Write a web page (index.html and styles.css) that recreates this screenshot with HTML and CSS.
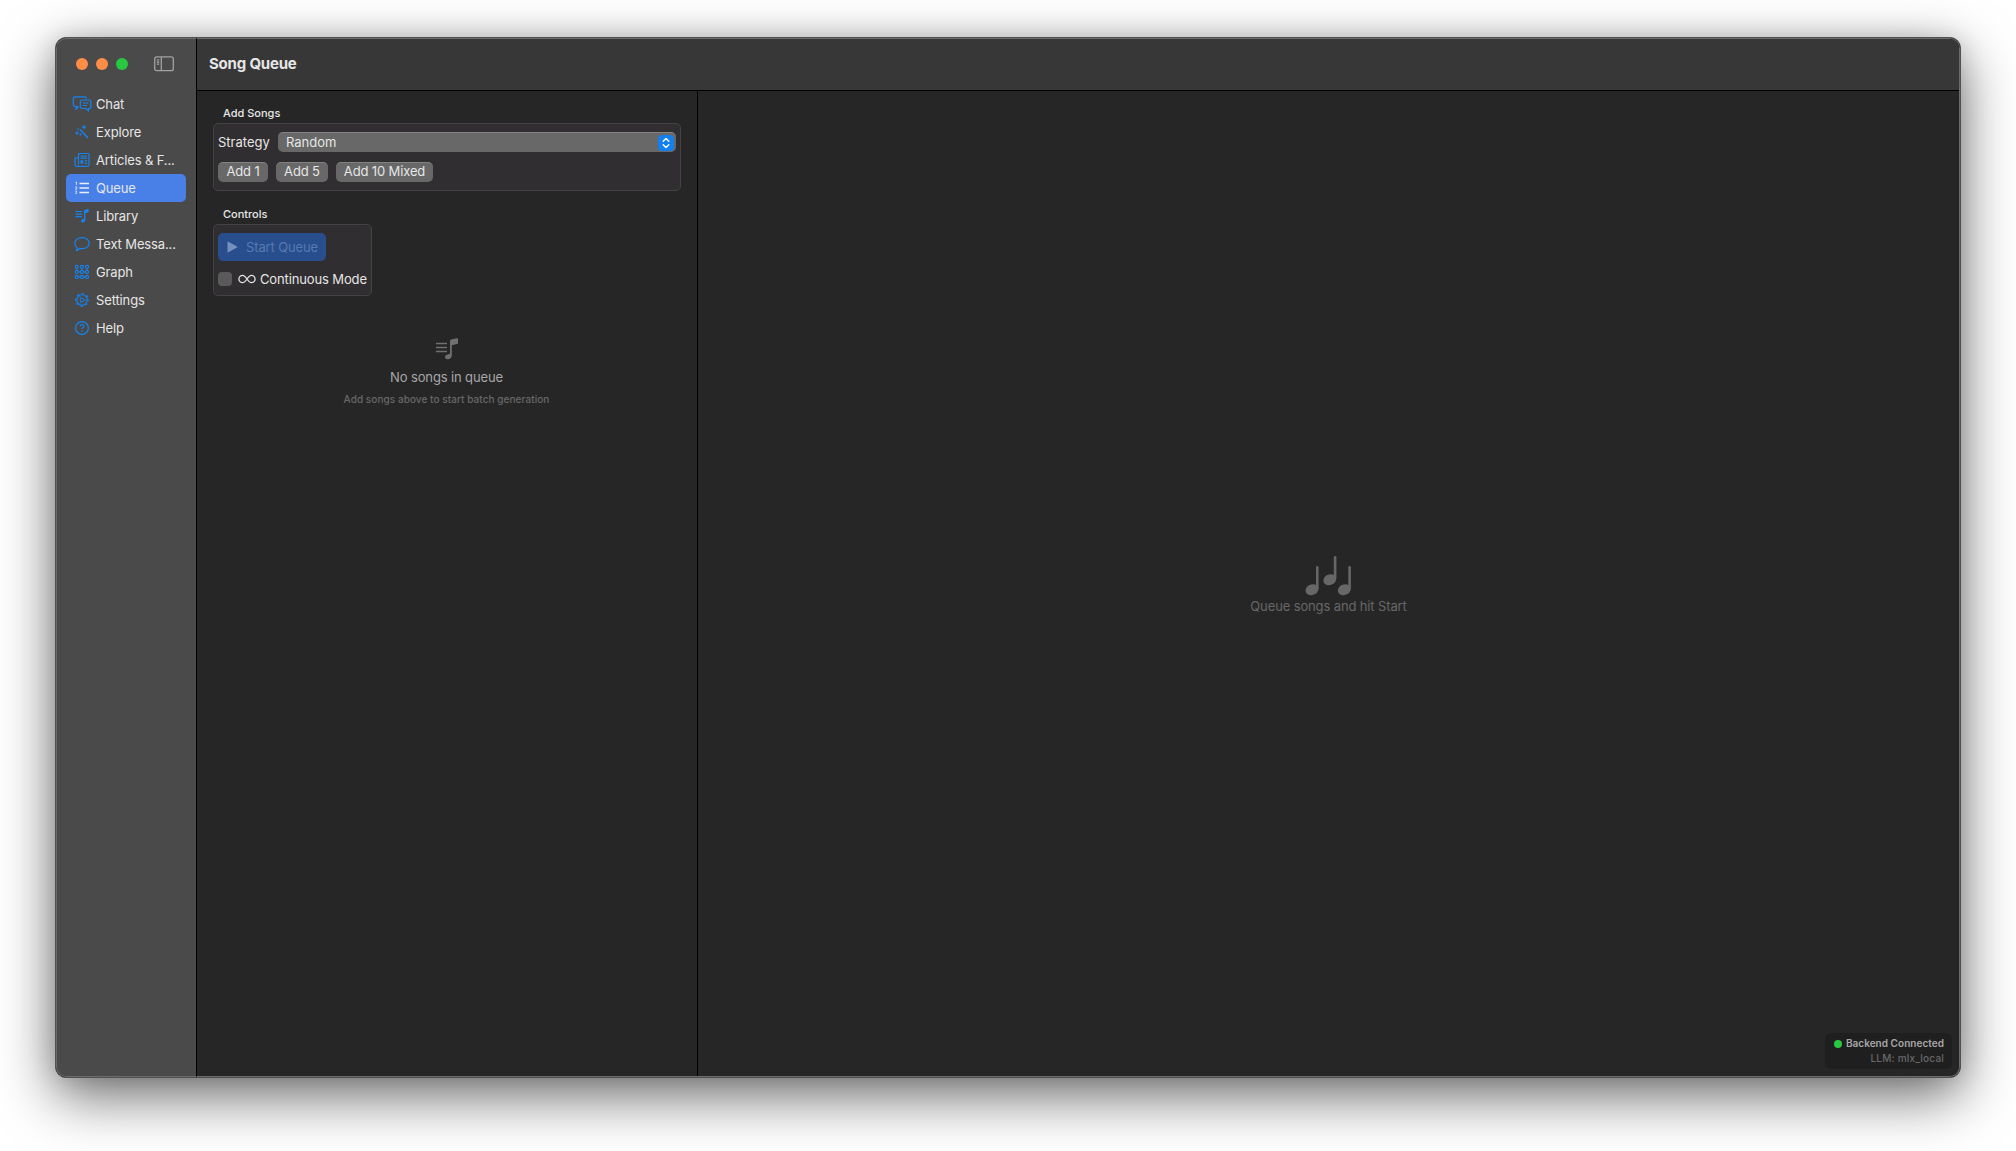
FILE: index.html
```
<!DOCTYPE html>
<html lang="en">
<head>
  <meta charset="UTF-8" />
  <meta name="viewport" content="width=device-width, initial-scale=1.0" />
  <title>Song Queue</title>
  <link rel="stylesheet" href="styles.css">
</head>
<body>
  <div class="window">
    <aside class="sidebar">
      <div class="window-controls">
        <span class="light"></span>
        <span class="light"></span>
        <span class="light green"></span>
        <svg class="toggle" width="20" height="16" viewBox="0 0 20 16" fill="none" stroke="#a2a2a2" stroke-width="1.3">
          <rect x=".7" y=".9" width="18.6" height="13.8" rx="2" />
          <path d="M7.3 1v13.6M2.8 3.8h2.4M2.8 6h2.4M2.8 8.2h2.4" />
        </svg>
      </div>
      <nav class="nav">
        <a class="nav-item">
          <svg class="icon" viewBox="0 0 20 16"><path d="M6 10.500H3.300A2 2 0 0 1 1.300 8.500V2.900A2 2 0 0 1 3.300 .9h9.400a2 2 0 0 1 2 1.600M4 10.500v2.700l2.700-2.400M10.300 4h6.600A2 2 0 0 1 18.900 6v4.500A2 2 0 0 1 16.900 12.500h-.4v2.300L14 12.500h-3.700A2 2 0 0 1 8.300 10.500V6A2 2 0 0 1 10.300 4zM10.800 7h5.600M10.800 9.500h4" /></svg>
          <span>Chat</span>
        </a>
        <a class="nav-item">
          <svg class="icon" viewBox="0 0 20 16"><path d="M8 5.500l8 8.500" stroke-width="1.600" /><path d="M12 1.200v4M10 3.200h4M5.500 4.700l1.500 1M5 7.200v3.600M3.200 9h3.600M8.500 9.500v2M7.500 10.500h2" /></svg>
          <span>Explore</span>
        </a>
        <a class="nav-item">
          <svg class="icon" viewBox="0 0 20 16"><path d="M7 14.300H4.500a1.500 1.500 0 0 1-1.500-1.500V6h3.500M6.500 12.800V2.500a1 1 0 0 1 1-1h8.500a1 1 0 0 1 1 1v10.300a1.500 1.500 0 0 1-1.500 1.500H5.500M8.500 4h6.500M8.500 6.200h6.500M12.800 8.900h2.400M12.800 11.300h2.400" /><path class="fill" d="M8.500 8.300h2.800v3.300H8.500z" /></svg>
          <span>Articles &amp; F...</span>
        </a>
        <a class="nav-item active">
          <svg class="icon" viewBox="0 0 20 16"><path d="M7.500 3.500h9.500M7.500 8h9.500M7.500 12.500h9.500" stroke-width="1.400" /><path d="M3.500 2.500l1-.6v3M3.200 6.900h1.600v1l-1.400 1.300h1.600M3.300 11.200h1.500l-.7 1.200.8.800-1.600.5" stroke-width=".8" /></svg>
          <span>Queue</span>
        </a>
        <a class="nav-item">
          <svg class="icon" viewBox="0 0 20 16"><path d="M3.500 3.500h6.500M3.500 6.100h6.500M3.500 8.700h6.500" /><path class="fill" d="M12 3q0-1 1-1.200l3-.8q.6-.1.600.5v2.200q0 .5-.6.700l-2.600.700v7q0 2-2.300 2.400Q9 14.500 9 12.900q0-1.300 1.800-1.700l1.200-.4z" /></svg>
          <span>Library</span>
        </a>
        <a class="nav-item">
          <svg class="icon" viewBox="0 0 20 16"><path d="M10 1.700c4.200 0 7.200 2.400 7.200 5.500s-3 5.500-7.200 5.500c-.8 0-1.500-.1-2.100-.2-1 1-2.200 1.700-3.400 1.800.6-.8.900-1.700.800-2.600C3.700 10.700 2.800 9.100 2.800 7.200c0-3.100 3-5.500 7.200-5.500z" /></svg>
          <span>Text Messa...</span>
        </a>
        <a class="nav-item">
          <svg class="icon" viewBox="0 0 20 16"><g stroke-width="1.100"><circle cx="4.800" cy="2.900" r="1.500" /><circle cx="9.900" cy="2.900" r="1.500" /><circle cx="15" cy="2.900" r="1.500" /><circle cx="4.800" cy="7.900" r="1.500" /><circle cx="9.900" cy="7.900" r="1.500" /><circle cx="15" cy="7.900" r="1.500" /><circle cx="4.800" cy="12.900" r="1.500" /><circle cx="9.900" cy="12.900" r="1.500" /><circle cx="15" cy="12.900" r="1.500" /><path d="M6.300 7.900h2.100M11.400 7.900h2.100M6.300 12.900h2.100M11.400 12.900h2.100M4.800 4.400v2M9.900 4.400v2M15 4.400v2" /></g></svg>
          <span>Graph</span>
        </a>
        <a class="nav-item">
          <svg class="icon" viewBox="0 0 20 16"><circle cx="10" cy="8" r="5.200" stroke-width="1.100" /><circle cx="10" cy="8" r="6.300" stroke-width="1.200" stroke-dasharray="2.474 2.474" stroke-dashoffset="1.237" /><circle cx="10" cy="8" r="1.900" stroke-width="1" /><path d="M9 6.300L7.500 3.700M9 9.700l-1.500 2.600M12 8h3" stroke-width=".7" /></svg>
          <span>Settings</span>
        </a>
        <a class="nav-item">
          <svg class="icon" viewBox="0 0 20 16"><circle cx="10" cy="8" r="6.400" /><path d="M8.200 6.400c0-2.600 3.800-2.400 3.800-.2 0 1.400-2 1.400-2 3M10 10.600v1.300" /></svg>
          <span>Help</span>
        </a>
      </nav>
    </aside>

    <main class="main">
      <header class="titlebar">
        <h1>Song Queue</h1>
      </header>
      <div class="panes">
        <section class="queue-pane">
          <h2 class="group-label">Add Songs</h2>
          <div class="group add-group">
            <div class="row strategy-row">
              <span class="strategy-label">Strategy</span>
              <div class="select">
                <span class="select-value">Random</span>
                <span class="stepper">
                  <svg width="10" height="12" viewBox="0 0 10 12" fill="none" stroke="#fff" stroke-width="1.400" stroke-linecap="round" stroke-linejoin="round"><path d="M2.200 4.200L5 1.500l2.800 2.700M2.200 7.800L5 10.500l2.800-2.700" /></svg>
                </span>
              </div>
            </div>
            <div class="row">
              <button class="btn add-one">Add 1</button>
              <button class="btn add-five">Add 5</button>
              <button class="btn add-mixed">Add 10 Mixed</button>
            </div>
          </div>

          <h2 class="group-label controls-label">Controls</h2>
          <div class="group controls-group">
            <button class="start" disabled>
              <svg width="11" height="12" viewBox="0 0 11 12"><path d="M.5 1.200q0-1 .9-.5l8.600 4.700q.8.600 0 1.200l-8.600 4.700q-.9.500-.9-.5z" fill="#7590bd" /></svg>
              <span>Start Queue</span>
            </button>
            <label class="continuous">
              <span class="checkbox"></span>
              <svg width="18" height="10" viewBox="0 0 18 10" fill="none" stroke="#e4e4e4" stroke-width="1.300"><path d="M9 5C7.300 2.500 6.200 1.300 4.600 1.300a3.700 3.700 0 0 0 0 7.400C6.200 8.700 7.300 7.500 9 5s2.800-3.700 4.400-3.700a3.700 3.700 0 0 1 0 7.400C11.800 8.700 10.700 7.500 9 5z" /></svg>
              <span class="continuous-text">Continuous Mode</span>
            </label>
          </div>

          <div class="empty">
            <svg width="24" height="22" viewBox="0 0 24 22"><path d="M1 5.500h11M1 9.500h11M1 13.500h11" stroke="#707070" stroke-width="1.400" /><path d="M15 3q0-1.200 1.200-1.500L22 .3q1-.2 1 .7v4q0 .8-.9 1l-5.300 1.200v10.300q0 3-3.600 3.700-3.300.4-3.300-2.100 0-2 2.600-2.700l2.500-.6z" fill="#707070" /></svg>
            <p class="empty-title">No songs in queue</p>
            <p class="empty-hint">Add songs above to start batch generation</p>
          </div>
        </section>

        <section class="detail-pane">
          <div class="placeholder">
            <svg width="46" height="40" viewBox="0 0 46 40" fill="#676767">
              <g id="note">
                <ellipse cx="7" cy="33.700" rx="6.600" ry="5.300" transform="rotate(-22 7 33.700)" />
                <path d="M11 11.200q0-1.200 1.300-1.200t1.300 1.200V33H11z" />
              </g>
              <use href="#note" x="17.800" y="-10" />
              <use href="#note" x="32.300" />
            </svg>
            <p>Queue songs and hit Start</p>
          </div>
          <div class="status">
            <div class="status-line"><span class="dot"></span><span class="status-text">Backend Connected</span></div>
            <div class="status-model">LLM: mlx_local</div>
          </div>
        </section>
      </div>
    </main>
  </div>
</body>
</html>
```
FILE: styles.css
```
* {
  box-sizing: border-box;
}
body {
  margin: 0;
  height: 1151px;
  padding: 37px 55px 73px;
  overflow: hidden;
  background-color: #fff;
  color: #e6e6e6;
  font-family: Inter, 'Liberation Sans', sans-serif;
  font-size: 13px;
  line-height: 16px;
  letter-spacing: -0.13px;
}
h1, h2, p {
  margin: 0;
}
.window {
  display: flex;
  width: 1906px;
  height: 1041px;
  border: 1px solid #515151;
  border-radius: 11px;
  overflow: hidden;
  background-color: #262626;
  box-shadow: 0 18px 56px rgba(0, 0, 0, 0.58), 0 0 24px rgba(0, 0, 0, 0.12);
}

/* Sidebar */
.sidebar {
  width: 141px;
  flex: none;
  border: 1px solid #6b6b6b;
  border-right: 1px solid #000;
  border-radius: 10px 0 0 10px;
  background-color: #4a4a4a;
}
.window-controls {
  display: flex;
  align-items: center;
  gap: 8px;
  height: 51px;
  padding: 0 0 1px 19px;
}
.light {
  width: 12px;
  height: 12px;
  border-radius: 50%;
  background-color: #ff8d48;
}
.green {
  background-color: #28c840;
}
.toggle {
  margin-left: 18px;
}
.nav {
  padding: 0 9px;
}
.nav-item {
  display: flex;
  align-items: center;
  gap: 4px;
  height: 28px;
  padding-left: 6px;
  border-radius: 5px;
  white-space: nowrap;
}
.icon {
  width: 20px;
  height: 16px;
  flex: none;
  fill: none;
  stroke: #1683f0;
  stroke-width: 1.2;
}
.icon .fill {
  fill: #1683f0;
  stroke: none;
}
.active {
  width: 120px;
  background-color: #4880e7;
}
.active .icon {
  stroke: #e9effb;
}

/* Main area */
.main {
  flex: 1;
  display: flex;
  flex-direction: column;
  border: 1px solid #6b6b6b;
  border-left: none;
  border-radius: 0 10px 10px 0;
}
.titlebar {
  display: flex;
  align-items: center;
  height: 52px;
  padding: 0 0 2px 12px;
  border-bottom: 1px solid #000;
  background-color: #373737;
  border-radius: 0 9px 0 0;
}
.titlebar h1 {
  font-size: 15px;
  line-height: 18px;
  font-weight: 700;
  letter-spacing: -0.2px;
}
.panes {
  flex: 1;
  display: flex;
}
.queue-pane {
  width: 501px;
  padding: 15px 16px;
  border-right: 1px solid #000;
}
.group-label {
  padding-left: 10px;
  font-size: 11px;
  line-height: 14px;
  font-weight: 500;
  letter-spacing: 0;
}
.group {
  border: 1px solid #434244;
  border-radius: 5px;
  background-color: #302e30;
}
.add-group {
  height: 68px;
  margin-top: 3px;
  padding: 8px 4px;
}
.row {
  display: flex;
  align-items: center;
  gap: 8px;
}
.strategy-row {
  margin-bottom: 10px;
}
.strategy-label {
  width: 52px;
  white-space: nowrap;
  letter-spacing: 0;
}
.select {
  flex: 1;
  display: flex;
  align-items: center;
  justify-content: space-between;
  height: 20px;
  padding: 0 2px 0 8px;
  border-top: 1px solid #828282;
  border-radius: 5px;
  background-color: #686868;
}
.select-value {
  padding-bottom: 2px;
  letter-spacing: 0;
}
.stepper {
  display: flex;
  align-items: center;
  justify-content: center;
  width: 16px;
  height: 16px;
  border-radius: 4px;
  background-color: #1480ee;
}
.btn {
  height: 20px;
  padding: 0 0 2px;
  border: none;
  border-top: 1px solid #828282;
  border-radius: 5px;
  background-color: #686868;
  color: #e6e6e6;
  font: inherit;
  line-height: 17px;
  letter-spacing: inherit;
  white-space: nowrap;
}
.add-one {
  width: 50px;
}
.add-five {
  width: 52px;
}
.add-mixed {
  width: 97px;
}
.controls-label {
  margin-top: 16px;
}
.controls-group {
  width: 159px;
  height: 72px;
  margin-top: 3px;
  padding: 8px 4px;
}
.start {
  display: flex;
  align-items: center;
  gap: 8px;
  width: 108px;
  height: 28px;
  padding: 0 0 1px 9px;
  border: none;
  border-radius: 5px;
  background-color: #294e8d;
  color: #5779b1;
  font: inherit;
  letter-spacing: inherit;
  white-space: nowrap;
}
.continuous {
  display: flex;
  align-items: center;
  margin-top: 10px;
  white-space: nowrap;
}
.checkbox {
  width: 14px;
  height: 14px;
  margin-right: 6px;
  border-radius: 4px;
  background-color: #5b5a5b;
}
.continuous-text {
  margin-left: 4px;
}
.empty {
  display: flex;
  flex-direction: column;
  align-items: center;
  margin-top: 42px;
  padding-right: 1px;
}
.empty-title {
  margin-top: 9px;
  color: #a7a7a7;
}
.empty-hint {
  margin-top: 8px;
  color: #686868;
  font-size: 10px;
  line-height: 13px;
  font-weight: 500;
  letter-spacing: 0.06px;
}

/* Right side */
.detail-pane {
  position: relative;
  flex: 1;
  display: flex;
  justify-content: center;
  padding-top: 465px;
}
.placeholder {
  display: flex;
  flex-direction: column;
  align-items: center;
  color: #676767;
}
.placeholder p {
  margin-top: 2px;
}
.status {
  position: absolute;
  right: 7px;
  bottom: 7px;
  width: 127px;
  height: 36px;
  padding: 3px 8px 0 0;
  border-radius: 6px;
  background-color: #201f20;
  font-size: 10px;
  line-height: 15px;
  letter-spacing: 0.04px;
  text-align: right;
}
.status-line {
  display: flex;
  align-items: center;
  justify-content: flex-end;
  gap: 4px;
  color: #a7a7a7;
  font-weight: 600;
}
.dot {
  width: 8px;
  height: 8px;
  border-radius: 50%;
  background-color: #28c840;
}
.status-model {
  color: #686868;
  font-weight: 500;
  letter-spacing: 0.2px;
}
```
